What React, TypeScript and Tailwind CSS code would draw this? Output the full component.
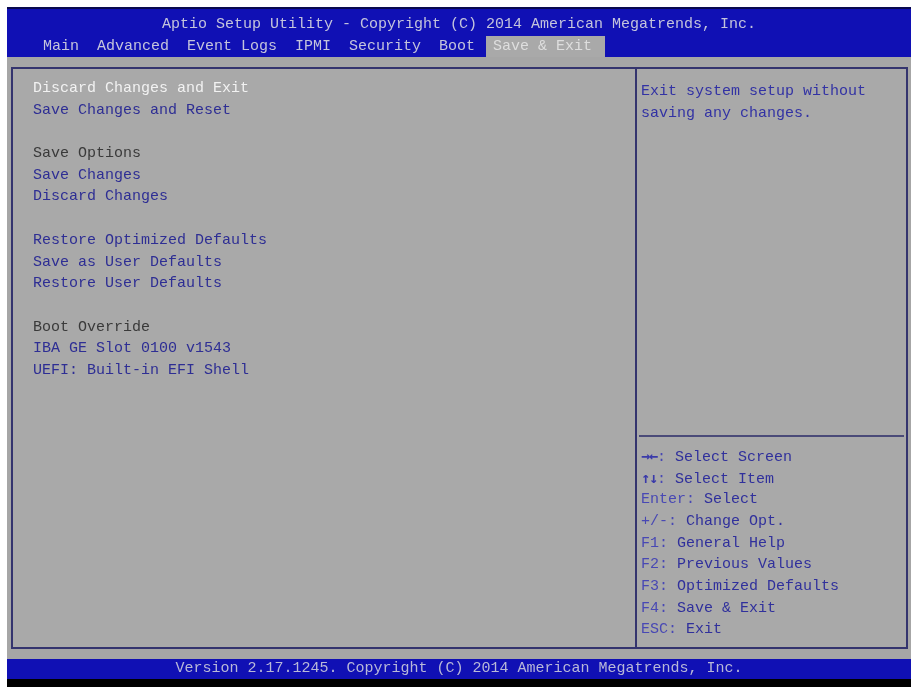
import React from "react";

const mono = { fontFamily: '"Liberation Mono", "DejaVu Sans Mono", monospace' };
const arrows = { fontFamily: '"DejaVu Sans Mono", monospace' };

const tabs = ["Main", "Advanced", "Event Logs", "IPMI", "Security", "Boot"];

type Item = { text: string; kind: "sel" | "opt" | "head" | "gap" };

const items: Item[] = [
  { text: "Discard Changes and Exit", kind: "sel" },
  { text: "Save Changes and Reset", kind: "opt" },
  { text: "", kind: "gap" },
  { text: "Save Options", kind: "head" },
  { text: "Save Changes", kind: "opt" },
  { text: "Discard Changes", kind: "opt" },
  { text: "", kind: "gap" },
  { text: "Restore Optimized Defaults", kind: "opt" },
  { text: "Save as User Defaults", kind: "opt" },
  { text: "Restore User Defaults", kind: "opt" },
  { text: "", kind: "gap" },
  { text: "Boot Override", kind: "head" },
  { text: "IBA GE Slot 0100 v1543", kind: "opt" },
  { text: "UEFI: Built-in EFI Shell", kind: "opt" },
];

const legend = [
  ["→←", ":", "Select Screen"],
  ["↑↓", ":", "Select Item"],
  ["", "Enter:", "Select"],
  ["", "+/-:", "Change Opt."],
  ["", "F1:", "General Help"],
  ["", "F2:", "Previous Values"],
  ["", "F3:", "Optimized Defaults"],
  ["", "F4:", "Save & Exit"],
  ["", "ESC:", "Exit"],
];

export default function App() {
  return (
    <div className="w-[915px] h-[687px] bg-white pt-[7px] pl-[7px] pr-[4px] overflow-hidden" style={mono}>
      <div className="h-full flex flex-col text-[15px] leading-[21.7px] blur-[0.35px]">
        {/* Header */}
        <div className="h-[50px] bg-[#1010b4] border-t-2 border-[#0a0a50] flex flex-col text-[#c4c4dc]">
          <div className="h-[27px] pt-[4px] flex items-center justify-center whitespace-pre">
            Aptio Setup Utility - Copyright (C) 2014 American Megatrends, Inc.
          </div>
          <div className="flex-1 flex items-end pl-[29px] whitespace-pre">
            {tabs.map((t) => (
              <span key={t} className="h-[21px] flex items-center pl-[7px] pr-[11px]">
                {t}
              </span>
            ))}
            <span className="h-[21px] flex items-center pl-[7px] pr-[13px] bg-[#a9a9a9] text-[#dedede]">
              Save &amp; Exit
            </span>
          </div>
        </div>

        {/* Body */}
        <div className="flex-1 bg-[#a6a6a6] pt-[10px] pb-[10px] pl-[4px] pr-[3px] flex">
          <div className="flex-1 flex border-2 border-[#34346e] bg-[#a9a9a9]">
            <div className="flex-1 pl-[20px] pt-[9px]">
              {items.map((it, i) => (
                <div
                  key={i}
                  className={
                    "h-[21.7px] whitespace-pre " +
                    (it.kind === "sel"
                      ? "text-[#f2f2f2]"
                      : it.kind === "head"
                      ? "text-[#3a3a3a]"
                      : "text-[#2e2e94]")
                  }
                >
                  {it.text}
                </div>
              ))}
            </div>
            <div className="w-[271px] border-l-2 border-[#34346e] flex flex-col">
              <div className="flex-1 pl-[4px] pt-[12px] text-[#3232a4]">
                <div>Exit system setup without</div>
                <div>saving any changes.</div>
              </div>
              <div className="mx-[2px] h-[2px] bg-[#4a4a78]" />
              <div className="pl-[4px] pt-[9px] pb-[6px]">
                {legend.map(([a, k, d]) => (
                  <div key={k + d} className="h-[21.7px] whitespace-pre">
                    {a && (
                      <span className="text-[#3a3aaa] font-bold tracking-[-1px]" style={arrows}>
                        {a}
                      </span>
                    )}
                    <span className="text-[#4848b4]">{k}</span>
                    <span className="text-[#30309c]"> {d}</span>
                  </div>
                ))}
              </div>
            </div>
          </div>
        </div>

        {/* Footer */}
        <div className="h-[20px] bg-[#1010b4] flex items-center justify-center text-[#b8b8d8] whitespace-pre">
          Version 2.17.1245. Copyright (C) 2014 American Megatrends, Inc.
        </div>
        <div className="h-[8px] bg-black" />
      </div>
    </div>
  );
}
